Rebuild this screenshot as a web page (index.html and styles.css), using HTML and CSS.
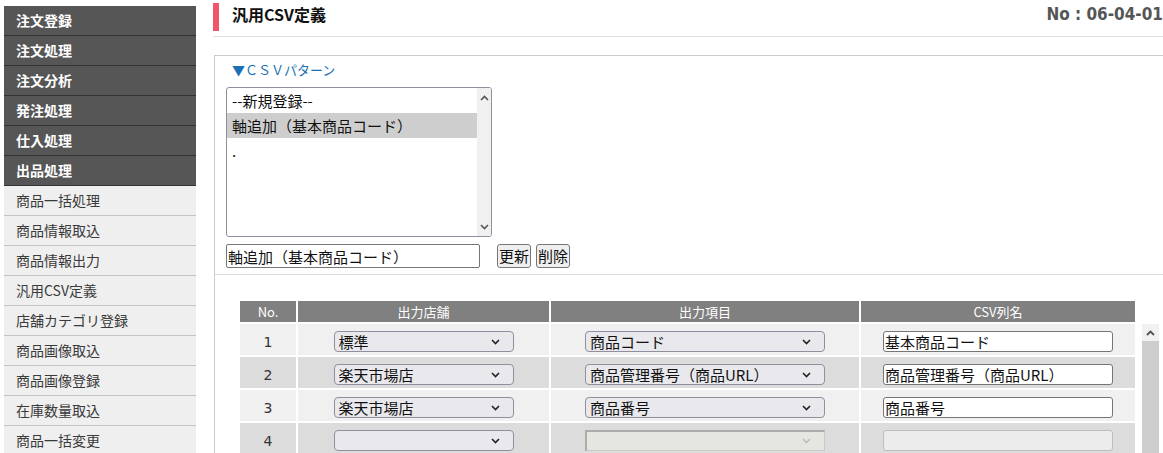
FILE: index.html
```html
<!DOCTYPE html>
<html lang="ja">
<head>
    <meta charset="UTF-8">
    <meta name="viewport" content="width=device-width, initial-scale=1.0">
    <title>汎用CSV定義</title>
    <link rel="stylesheet" href="styles.css">
</head>
<body>
<div class="layout">
    <!-- Side menu -->
    <nav class="sidemenu">
        <a class="menu-head">注文登録</a>
        <a class="menu-head">注文処理</a>
        <a class="menu-head">注文分析</a>
        <a class="menu-head">発注処理</a>
        <a class="menu-head">仕入処理</a>
        <a class="menu-head">出品処理</a>
        <a class="menu-item">商品一括処理</a>
        <a class="menu-item">商品情報取込</a>
        <a class="menu-item">商品情報出力</a>
        <a class="menu-item">汎用CSV定義</a>
        <a class="menu-item">店舗カテゴリ登録</a>
        <a class="menu-item">商品画像取込</a>
        <a class="menu-item">商品画像登録</a>
        <a class="menu-item">在庫数量取込</a>
        <a class="menu-item">商品一括変更</a>
    </nav>

    <main class="content">
        <div class="page-head">
            <h1 class="page-title">汎用CSV定義</h1>
            <span class="page-no">No : 06-04-01</span>
        </div>

        <div class="panel">
            <!-- CSV pattern -->
            <div class="pattern">
                <a class="pattern-link">▼ＣＳＶパターン</a>
                <div class="listbox">
                    <div class="listbox-options">
                        <div class="option">--新規登録--</div>
                        <div class="option selected">軸追加（基本商品コード）</div>
                        <div class="option">.</div>
                    </div>
                    <div class="listbox-bar">
                        <svg width="9" height="6" viewBox="0 0 9 6"><path d="M1 5l3.5-3.5L8 5" fill="none" stroke="#555" stroke-width="1.6"/></svg>
                        <svg width="9" height="6" viewBox="0 0 9 6"><path d="M1 1l3.5 3.5L8 1" fill="none" stroke="#555" stroke-width="1.6"/></svg>
                    </div>
                </div>
                <div class="edit-row">
                    <input type="text" class="pattern-name" value="軸追加（基本商品コード）">
                    <button type="button" class="btn btn-update">更新</button>
                    <button type="button" class="btn">削除</button>
                </div>
            </div>

            <!-- Columns -->
            <div class="grid-area">
                <table class="col-table">
                    <colgroup>
                        <col class="c-no"><col class="c-shop"><col class="c-item"><col class="c-name">
                    </colgroup>
                    <thead>
                        <tr><th>No.</th><th>出力店舗</th><th>出力項目</th><th>CSV列名</th></tr>
                    </thead>
                    <tbody>
                        <tr class="odd">
                            <td class="num">1</td>
                            <td><select class="sel-shop"><option>標準</option></select></td>
                            <td><select class="sel-item"><option>商品コード</option></select></td>
                            <td><input type="text" class="csv-name" value="基本商品コード"></td>
                        </tr>
                        <tr class="even">
                            <td class="num">2</td>
                            <td><select class="sel-shop"><option>楽天市場店</option></select></td>
                            <td><select class="sel-item"><option>商品管理番号（商品URL）</option></select></td>
                            <td><input type="text" class="csv-name" value="商品管理番号（商品URL）"></td>
                        </tr>
                        <tr class="odd">
                            <td class="num">3</td>
                            <td><select class="sel-shop"><option>楽天市場店</option></select></td>
                            <td><select class="sel-item"><option>商品番号</option></select></td>
                            <td><input type="text" class="csv-name" value="商品番号"></td>
                        </tr>
                        <tr class="even">
                            <td class="num">4</td>
                            <td><select class="sel-shop"><option></option></select></td>
                            <td><select class="sel-item" disabled><option></option></select></td>
                            <td><input type="text" class="csv-name" disabled></td>
                        </tr>
                    </tbody>
                </table>
                <div class="scrollbar">
                    <div class="scroll-up">
                        <svg width="9" height="6" viewBox="0 0 9 6"><path d="M1 5l3.5-3.5L8 5" fill="none" stroke="#505050" stroke-width="1.8"/></svg>
                    </div>
                    <div class="scroll-thumb"></div>
                </div>
            </div>
        </div>
    </main>
</div>
</body>
</html>
```

FILE: styles.css
```css
* { margin: 0; padding: 0; box-sizing: border-box; }
body { font-family: "Noto Sans CJK JP", "Noto Sans", sans-serif; background-color: #fff; color: #222; overflow: hidden; }
.layout { display: flex; align-items: flex-start; padding-left: 4px; }

/* Side menu */
.sidemenu { width: 192px; flex-shrink: 0; margin-top: 6px; display: flex; flex-direction: column; }
.sidemenu a { display: block; height: 30px; padding-left: 12px; font-size: 14px; line-height: 29px; text-decoration: none; cursor: pointer; }
.menu-head { background-color: #565656; color: #fff; font-weight: bold; border-bottom: 1px solid #333; }
.menu-item { background-color: #efefef; color: #3a3a3a; border-bottom: 1px solid #c4c4c4; }

/* Main */
.content { flex: 1; min-width: 0; margin-left: 17px; }
.page-head { display: flex; justify-content: space-between; align-items: flex-start; height: 37px; padding-top: 3px; border-bottom: 1px solid #e0e0e0; }
.page-title { height: 28px; border-left: 6px solid #f05468; padding-left: 13px; font-size: 16px; line-height: 22px; font-weight: bold; color: #111; }
.page-no { font-family: "DejaVu Sans Condensed", "DejaVu Sans", sans-serif; font-weight: bold; font-size: 17px; line-height: 22px; color: #555; }

.panel { margin-top: 18px; margin-left: 1px; border-top: 1px solid #ccc; border-left: 1px solid #ccc; }

.pattern { padding: 5px 0 6px 11px; border-bottom: 1px solid #ddd; }
.pattern-link { display: block; margin-left: 6px; font-size: 13px; line-height: 18px; color: #1b6fb5; cursor: pointer; }
.listbox { display: flex; width: 266px; height: 150px; margin-top: 8px; border: 1px solid #8f8f9d; border-radius: 3px; overflow: hidden; }
.listbox-options { flex: 1; }
.option { height: 25px; padding-left: 5px; font-size: 15px; line-height: 25px; color: #111; }
.option.selected { background-color: #cecece; }
.listbox-bar { width: 14px; background-color: #f0f0f0; display: flex; flex-direction: column; justify-content: space-between; align-items: center; padding: 7px 0 6px; }

.edit-row { display: flex; align-items: center; margin-top: 7px; }
.pattern-name { width: 254px; height: 24px; padding: 0 1px; border: 1px solid #767676; border-radius: 2px; font-family: inherit; font-size: 15px; color: #111; }
.btn { height: 24px; padding: 0 1px; margin-left: 5px; background-color: #efefef; border: 1px solid #767676; border-radius: 3px; font-family: inherit; font-size: 15px; line-height: 20px; color: #111; }
.btn-update { margin-left: 17px; }

/* Column table */
.grid-area { display: flex; align-items: flex-start; padding: 24px 0 0 23px; }
.col-table { table-layout: fixed; border-collapse: separate; border-spacing: 2px; width: 899px; }
.c-no { width: 56px; }
.c-shop { width: 251px; }
.c-item { width: 308px; }
.c-name { width: 274px; }
.col-table th { height: 21px; background-color: #808080; color: #fff; font-size: 13px; font-weight: normal; line-height: 21px; }
.col-table td { height: 31px; padding: 7px 0 3px; text-align: center; vertical-align: top; line-height: 21px; }
.col-table tr.odd td { background-color: #f0f0f0; }
.col-table tr.even td { background-color: #dcdcdc; }
.col-table td.num { padding: 8px 0 2px; font-family: "DejaVu Sans", sans-serif; font-size: 14px; color: #333; }

.col-table select { -webkit-appearance: none; appearance: none; height: 21px; padding: 0 20px 0 4px; border: 1px solid #8f8f9d; border-radius: 4px; background-color: #e9e9ed; background-image: url("data:image/svg+xml,%3Csvg xmlns='http://www.w3.org/2000/svg' width='9' height='6'%3E%3Cpath d='M1 1l3.5 3.5L8 1' fill='none' stroke='%23222' stroke-width='1.6'/%3E%3C/svg%3E"); background-repeat: no-repeat; background-position: right 13px center; font-family: inherit; font-size: 15px; line-height: 19px; color: #111; text-align: left; vertical-align: top; }
.sel-shop { width: 180px; }
.sel-item { width: 240px; }
.col-table select:disabled { background-color: #ebebe4; border: 1px solid #c2c2bc; border-top: 2px solid #999; border-left: 2px solid #999; border-radius: 0; background-image: url("data:image/svg+xml,%3Csvg xmlns='http://www.w3.org/2000/svg' width='9' height='6'%3E%3Cpath d='M1 1l3.5 3.5L8 1' fill='none' stroke='%23aaa' stroke-width='1.4'/%3E%3C/svg%3E"); }
.csv-name { width: 230px; height: 21px; padding: 0 1px; border: 1px solid #767676; border-radius: 3px; background-color: #fff; font-family: inherit; font-size: 15px; color: #111; vertical-align: top; }
.csv-name:disabled { background-color: #ececec; border-color: #bdbdbd; }

.scrollbar { width: 17px; margin: 25px 0 0 5px; height: 140px; display: flex; flex-direction: column; }
.scroll-up { height: 17px; background-color: #f1f1f1; display: flex; align-items: center; justify-content: center; }
.scroll-thumb { flex: 1; background-color: #cdcdcd; }
```
